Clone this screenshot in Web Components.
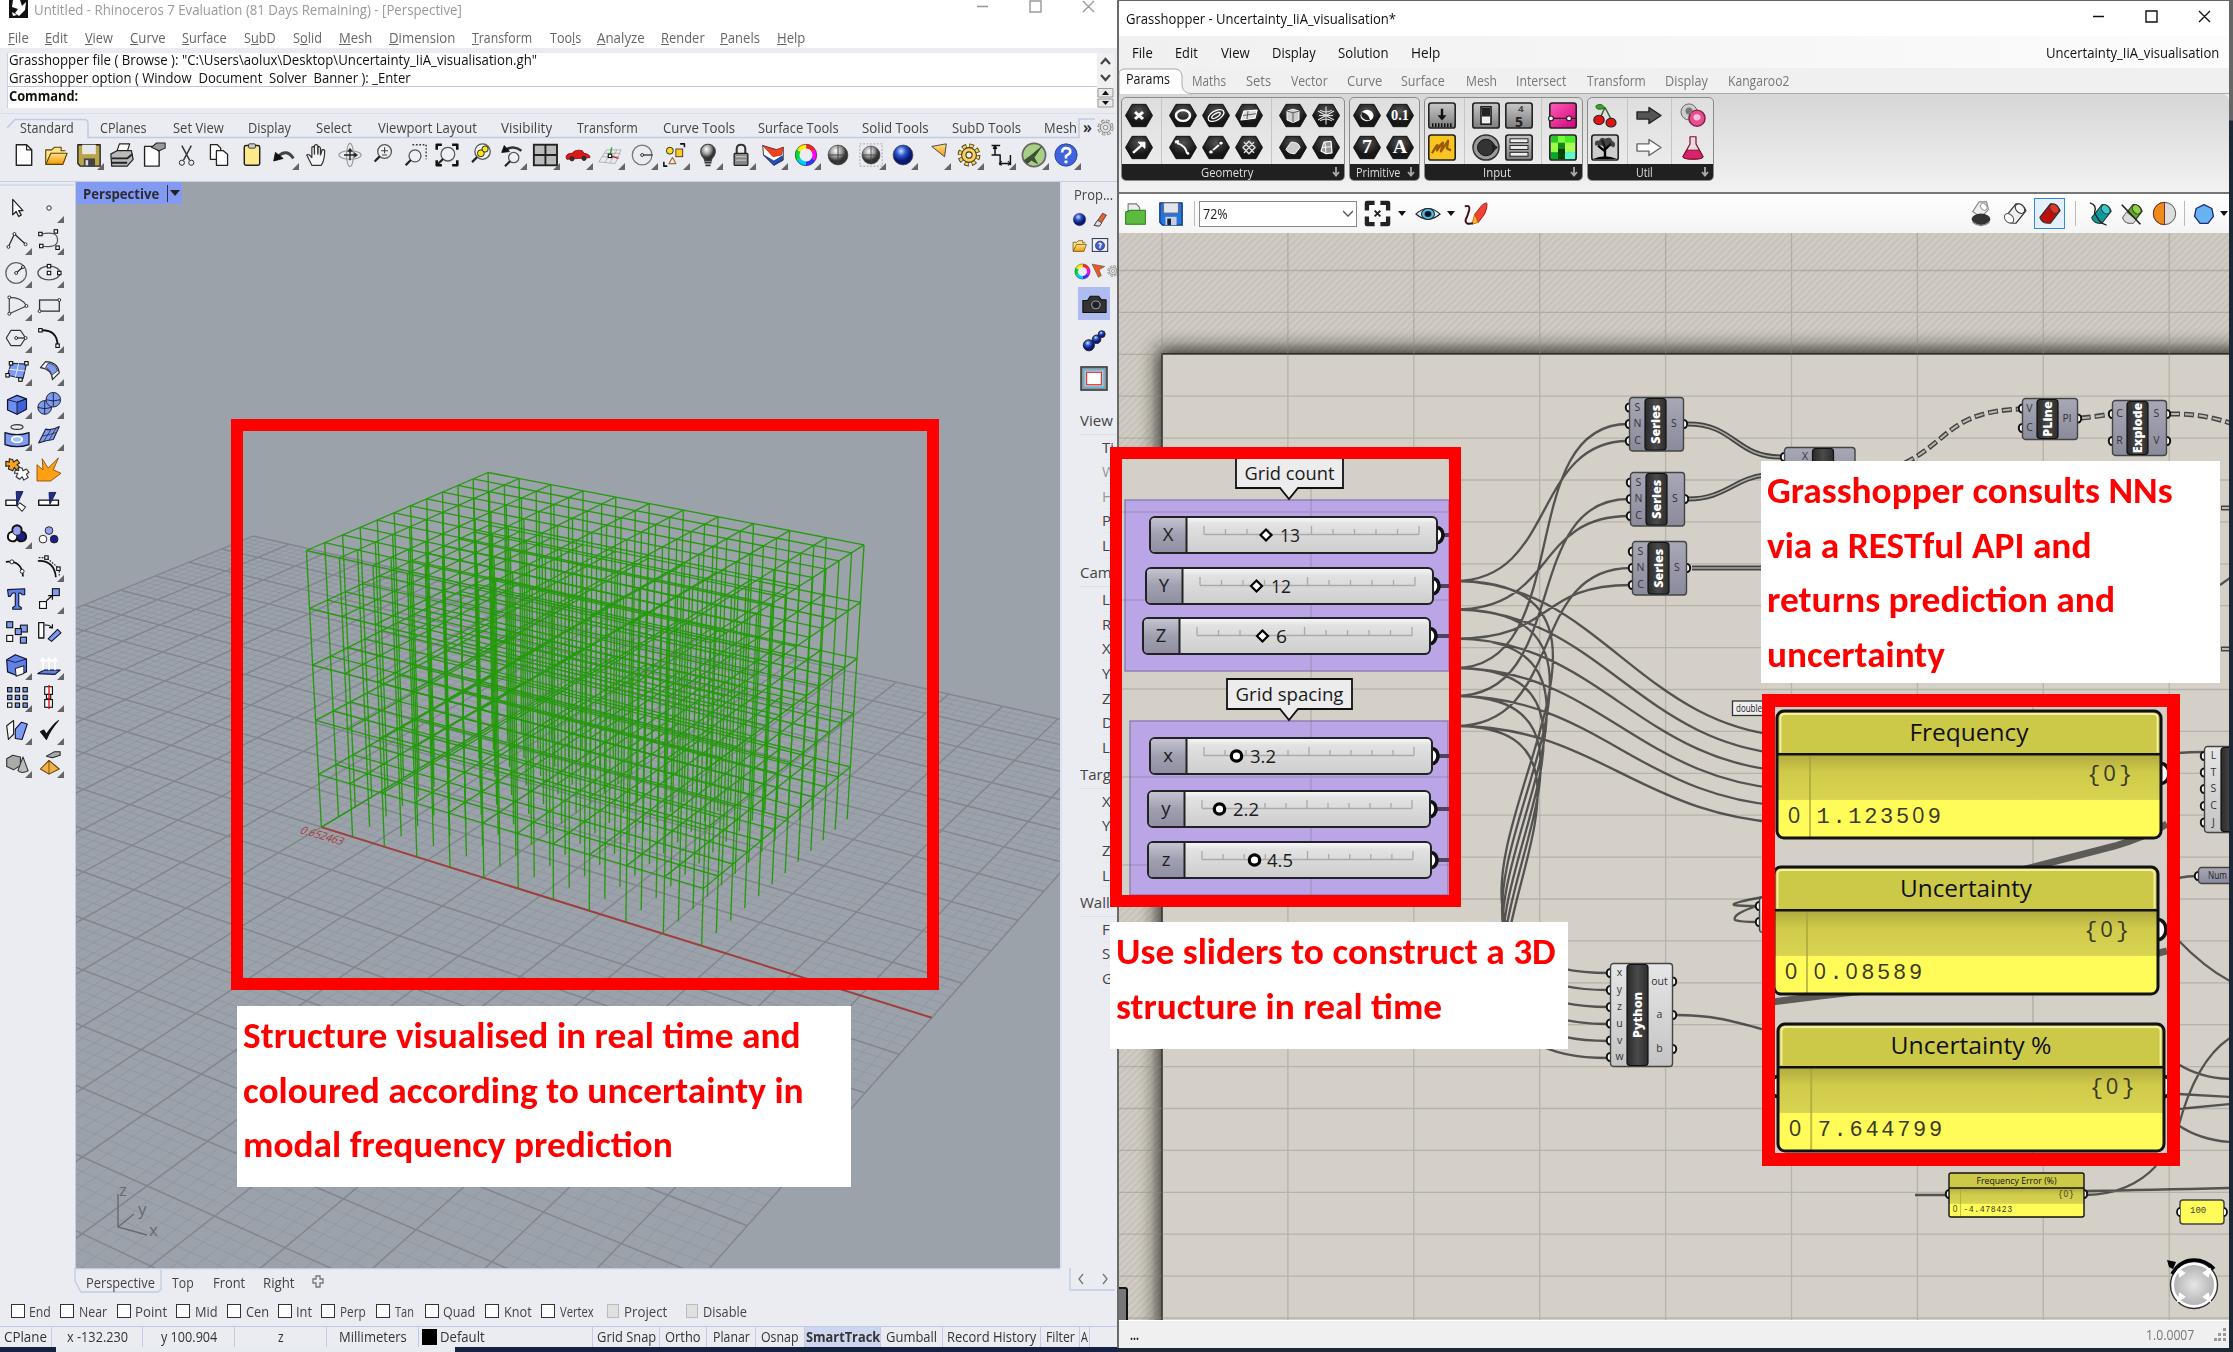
<!DOCTYPE html>
<html lang="en">
<head>
<meta charset="utf-8">
<title>Rhino and Grasshopper</title>
<style>
body{margin:0;width:2233px;height:1352px;overflow:hidden;font-family:"Open Sans","Noto Sans",sans-serif;background:#fff}
</style>
</head>
<body>
<desk-top></desk-top>
<script>
function define(name, css, html, after) {
  customElements.define(name, class extends HTMLElement {
    connectedCallback() {
      if (this.shadowRoot) return;
      const root = this.attachShadow({mode: 'open'});
      root.innerHTML = '<style>' + css + '</style>' + (typeof html === 'function' ? html(this) : html);
      if (after) after(this, root);
    }
  });
}
const num = (el, n) => parseFloat(el.getAttribute(n));

/* Text squeezed or stretched to a given width */
define('fit-text', ':host{display:inline-block;white-space:pre;flex:none}span{display:inline-block;transform-origin:0 50%}u{text-underline-offset:2px}', '<span><slot></slot></span>', (el, root) => {
  const s = root.querySelector('span'), w = num(el, 'w'), n = s.offsetWidth;
  el.style.width = w + 'px';
  if (n) s.style.transform = 'scaleX(' + (w / n) + ')';
});
/* A row of labels; each entry is [text, left, right] measured from the row's start */
function run(items, start) {
  let at = start || 0, out = '';
  for (const [t, a, b, cls] of items) {
    out += `<fit-text w="${b - a}" class="${cls || ''}" style="margin-left:${a - at}px">${t}</fit-text>`;
    at = b;
  }
  return out;
}

/* ---------- icons, all on a 28 x 28 box ---------- */
const S = (d, c, w, f) => `<path d="${d}" fill="${f || 'none'}" stroke="${c || '#222'}" stroke-width="${w || 1.4}" stroke-linejoin="round"/>`;
const sq = (x, y, f, s) => `<rect x="${x}" y="${y}" width="${s || 4}" height="${s || 4}" fill="${f || '#fff'}" stroke="#111" stroke-width="1.3"/>`;
const dot = (x, y, r, f) => `<circle cx="${x}" cy="${y}" r="${r || 1.7}" fill="${f || '#fff'}" stroke="#222" stroke-width="1.1"/>`;
const B = '#7d9cf0';
const lens = (x, y, r) => `<circle cx="${x}" cy="${y}" r="${r}" fill="#eef1f4" stroke="#555" stroke-width="1.5"/><path d="M${x - r * .7} ${y + r * .7}L${x - r * .7 - 6} ${y + r * .7 + 6}" stroke="#222" stroke-width="2.6"/>`;
const ball = (g) => `<circle cx="14" cy="14" r="10.5" fill="url(#${g})" stroke="#333" stroke-width=".7"/>`;
const wheel = (cx, cy, r, w) => ['#f22', '#f0f', '#33f', '#0cf', '#0d3', '#fe0'].map((c, i) => {
  const a = (i * 60 - 90) * Math.PI / 180, b = (i * 60 - 29) * Math.PI / 180;
  return `<path d="M${cx + r * Math.cos(a)} ${cy + r * Math.sin(a)}A${r} ${r} 0 0 1 ${cx + r * Math.cos(b)} ${cy + r * Math.sin(b)}" fill="none" stroke="${c}" stroke-width="${w}"/>`;
}).join('') + `<circle cx="${cx}" cy="${cy}" r="${r + w / 2}" fill="none" stroke="#333" stroke-width=".8"/>`;
const gear = (c, s) => `<circle cx="14" cy="14" r="10.800" fill="none" stroke="${s}" stroke-width="5" stroke-dasharray="5.200 3.280"/><circle cx="14" cy="14" r="10.500" fill="none" stroke="${c}" stroke-width="3.400" stroke-dasharray="3.600 4.647" stroke-dashoffset="-.7"/><circle cx="14" cy="14" r="8.600" fill="${c}" stroke="${s}" stroke-width="1.200"/><circle cx="14" cy="14" r="3.600" fill="#eee" stroke="${s}" stroke-width="1.300"/>`;
const hex = (g) => `<path d="M7 1.5H21L27.5 14 21 26.5H7L.5 14Z" fill="url(#hx)" stroke="#111"/>${g}`;
const key = (g, f) => `<rect x=".8" y="1" width="26.4" height="26" rx="2.5" fill="${f || 'url(#gy)'}" stroke="#222" stroke-width="1.6"/>${g}`;
const tube = (c, d) => `<path d="M4 18L15 4Q22 3 25 11L15 24Q6 25 4 18Z" fill="${c}" stroke="#333" stroke-width="1.200"/><ellipse cx="19" cy="9" rx="4" ry="5.5" transform="rotate(-40 19 9)" fill="${d}" stroke="#333"/>`;
const DEFS = `<defs>
<radialGradient id="hx" cx=".5" cy=".3"><stop offset="0" stop-color="#555"/><stop offset="1" stop-color="#161616"/></radialGradient>
<linearGradient id="gy" x2="0" y2="1"><stop offset="0" stop-color="#c8c8c8"/><stop offset="1" stop-color="#7d7d7d"/></linearGradient>
<radialGradient id="gb" cx=".4" cy=".3"><stop offset="0" stop-color="#fff"/><stop offset=".6" stop-color="#999"/><stop offset="1" stop-color="#333"/></radialGradient>
<radialGradient id="bb" cx=".4" cy=".3"><stop offset="0" stop-color="#cfe0ff"/><stop offset=".5" stop-color="#2a55d0"/><stop offset="1" stop-color="#0a1870"/></radialGradient>
<linearGradient id="yl" x2="0" y2="1"><stop offset="0" stop-color="#ffe08a"/><stop offset="1" stop-color="#f39a06"/></linearGradient>
<linearGradient id="pk" x2="1" y2="1"><stop offset="0" stop-color="#ff5fb4"/><stop offset="1" stop-color="#d2007c"/></linearGradient></defs>`;
const ICON = {
  page: S('M5 2H17L23 8V26H5Z', '#222', 1.6, '#fff') + S('M17 2V8H23'),
  open: S('M2 24V8H9L12 5H20V9H25', '#5a4300', 1.3, '#ffe28a') + S('M2 25L8 12H27L22 25Z', '#5a4300', 1.3, 'url(#yl)'),
  save: S('M1 2H27V27H4L1 24Z', '#222', 1.6, '#b8a548') + '<path d="M6 2H22V13H6Z" fill="#e8e8e8"/><path d="M8 18H21V27H8Z" fill="#444"/><path d="M10 20H13V26H10Z" fill="#ddd"/>',
  print: S('M8 10L11 1H23L20 10', '#222', 1.4, '#fff') + S('M1 13L8 9H25L27 19L20 27H2Z', '#222', 1.4, '#bbb') + S('M2 18H20L26 13M2 23H20', '#222', 2.2),
  prop: S('M3 4H14L20 10V27H3Z', '#222', 1.6, '#fff') + S('M11 5L17 0H27V6L20 9Z', '#222', 1.2, '#999'),
  cut: S('M8 3L17 20M19 3L10 20', '#333', 1.7) + dot(8, 23, 3, 'none') + dot(19, 23, 3, 'none'),
  copy: S('M4 2H12L16 6V19H4Z', '#222', 1.5, '#fff') + S('M11 9H19L24 13V26H11Z', '#222', 1.5, '#fff'),
  paste: '<rect x="5" y="3" width="18" height="23" rx="2" fill="#fbe98b" stroke="#222" stroke-width="1.7"/><rect x="10" y="1" width="8" height="5" rx="1" fill="#ccc" stroke="#222"/>',
  undo: S('M25 18Q17 6 7 16', '#444', 3.5) + S('M2 21L4 11L13 18Z', '#111', 1, '#111'),
  hand: S('M8 26Q5 20 2 14Q4 12 8 17V5Q10 3 11 6V13V3Q13 1 15 3V13V5Q17 3 18 6V14L20 8Q22 7 23 9Q23 20 19 26Z', '#333', 1.4, '#f4f4f4') + S('M11 12V5M15 12V4M18.500 13V7', '#333', 1),
  orbit: '<ellipse cx="14" cy="14" rx="13" ry="5" fill="none" stroke="#999" stroke-width="1.3"/><ellipse cx="14" cy="14" rx="4" ry="13.5" fill="none" stroke="#999" stroke-width="1.3"/>' + S('M7 14H21M14 8V20', '#222', 1.6) + S('M14 6L11 10H17ZM23 14L19 11V17Z', '#222', .5, '#222'),
  zoom: lens(17, 10, 8) + S('M13 9H21M17 5V12M14 14H20', '#444', 1.3),
  zwin: '<path d="M11 2H27V19" fill="none" stroke="#333" stroke-width="1.6" stroke-dasharray="2 2"/>' + lens(14, 15, 7),
  zext: S('M2 8V2H8M20 2H26V8M26 20V26H20M8 26H2V20', '#111', 3) + lens(15, 13, 8),
  zsel: lens(17, 10, 9) + dot(15, 12, 4, '#ffe610') + dot(20, 7, 3.6, '#ffe610'),
  zundo: lens(16, 17, 6) + S('M25 9Q16 2 7 8', '#333', 3) + S('M2 11L5 3L11 10Z', '#111', 1, '#111'),
  four: '<rect x="1" y="2" width="27" height="24" fill="#bbb" stroke="#222" stroke-width="2.2"/>' + S('M14.500 2V26M1 14H28', '#222', 2.2),
  car: S('M0 16Q1 12 7 12Q11 7 19 9L21 12Q28 13 28 17L1 19Z', '#801010', 1, '#e01717') + dot(7, 18.5, 2.4, '#333') + dot(21, 18, 2.4, '#333'),
  cplane: S('M1 22L10 8H27L20 24ZM5 16H24M8 12H26M8 23L16 8M14 23L22 8', '#aaa', 1) + S('M14 15L16 5', '#2a2', 1.6) + S('M14 15L24 18', '#c22', 1.6) + sq(12, 13),
  circ: '<circle cx="13" cy="14" r="11.5" fill="none" stroke="#777" stroke-width="1.5"/>' + S('M13 14H25') + dot(13, 14),
  sel: dot(8, 9, 4, '#ffdc1e') + '<rect x="15" y="7" width="8" height="9" fill="#ffc91e" stroke="#333"/>' + S('M7 24L11 17L15 24Z', '#a63', 1.3) + S('M20 1H25V5M1 22V27H5', '#111', 1.8),
  bulb: S('M10 21Q10 18 7 15Q3 8 9 3Q14 0 19 3Q25 8 21 15Q18 18 18 21Z', '#444', 1.3, 'url(#gb)') + S('M10 23H18M11 26H17', '#333', 2),
  lock: S('M9 13V7Q9 2 14 2Q19 2 19 7V13', '#333', 2.4) + '<rect x="6" y="12" width="16" height="14" rx="1" fill="#888" stroke="#222" stroke-width="1.5"/>' + S('M8 16H20M8 20H20', '#ddd', 1),
  render: S('M2 3L19 8L26 5V20L15 26L3 14Z', '#222', 1, '#fff') + S('M2 3L17 8L26 5L24 14L14 16Z', '#922', .8, '#f0441c') + S('M3 14L15 21L25 15V20L15 26Z', '#127', .8, '#2450b8'),
  wheel: wheel(14, 14, 10, 5), gball: `<g transform="translate(-1.400 -1.400) scale(1.1)">${ball('gb')}<path d="M4 14H24M14 4V24" stroke="#444"/></g>`, bball: `<g transform="translate(-1.400 -1.400) scale(1.1)">${ball('bb')}</g>`,
  gballd: '<rect x="1" y="1" width="26" height="26" fill="none" stroke="#999" stroke-dasharray="2 2"/>' + ball('gb') + S('M4 14H24M14 4V24', '#444', 1),
  cone: S('M9 4L26 1L24 16Z', '#444', 1.1, 'url(#yl)'), gears: gear('#f3d464', '#4a3a10'), gearg: gear('#ddd', '#777'),
  dim: S('M3 3H13M7 3V14M3 14H13V26M13 24H25M25 14V26M7 3L5 7M7 3L9 7', '#111', 1.7) + S('M15 21L12 24L15 26M22 21L25 24L22 26', '#111', 1.2),
  gh: '<circle cx="14" cy="14" r="13.500" fill="#a8cf86" stroke="#666" stroke-width="2"/>' + S('M3 20L10 15L23 4L14 17L18 24L11 20L6 24Z', '#354c2b', 1, '#3e5138'),
  help: '<circle cx="14" cy="14" r="13" fill="#3f63dc" stroke="#2440a0"/>' + S('M9.500 11Q9.500 6 14 6Q19 6 19 10Q19 13 14 15V18', '#fff', 3) + '<circle cx="14" cy="22" r="2" fill="#fff"/>',
  arrow: S('M9 4V22L13 18L16 24L19 22L16 17H21Z', '#222', 1.5, '#fff'), pt: dot(14, 14, 2.6),
  pline: S('M4 22L11 7L24 19') + dot(4, 22) + dot(11, 7) + dot(24, 19),
  crv: S('M5 7Q24 3 24 14Q24 24 5 21', '#555') + sq(2, 5) + sq(20, 2) + sq(3, 19) + sq(22, 21),
  circ2: '<circle cx="13" cy="14" r="12" fill="none" stroke="#666" stroke-width="1.5"/>' + S('M13 14L21 7') + dot(13, 14) + dot(21, 7),
  ell: '<ellipse cx="14" cy="14" rx="13" ry="8" fill="none" stroke="#555" stroke-width="1.5"/>' + sq(12, 4) + sq(12, 12) + sq(24, 12),
  arc: S('M5 4Q20 4 25 14L5 23Z', '#444') + dot(5, 4) + dot(25, 14) + dot(5, 23),
  rect: '<rect x="3" y="7" width="23" height="13" fill="none" stroke="#333" stroke-width="1.5"/>' + dot(26, 7) + dot(3, 20),
  poly: S('M7 5H18L24 14L18 23H7L1.500 14Z', '#333') + S('M13 14H24') + dot(13, 14) + dot(24, 14),
  blend: S('M4 5Q24 4 24 23', '#111', 2.2) + sq(2, 3) + sq(22, 21),
  srf: S('M7 5L25 6L21 23L3 19Z', '#224', 1.3, B) + S('M16 5L12 21M5 12L23 14', '#dfe7ff', 1.2) + sq(5, 3) + sq(23, 3) + sq(1, 17) + sq(16, 22),
  sweep: S('M4 10L10 3Q24 3 26 16L18 24Q18 12 4 10Z', '#333', 1.4, '#fff') + S('M13 5Q22 6 24 14L17 19Q16 12 10 10Z', '#335', 1, B),
  box: S('M3 9L14 4L25 8V20L14 26L3 21Z', '#113', 1.5, '#6d8ff0') + S('M14 12V26L25 20V8Z', '#113', 1, '#3f62d4') + S('M3 9L14 12L25 8', '#113', 1),
  balls: dot(9, 18, 8, B) + dot(19, 9, 8.5, B) + S('M1 18Q9 21 17 18M9 10V26M11 9Q19 12 27 9M19 1V17', '#113', 1),
  hole: '<ellipse cx="14" cy="3.500" rx="7" ry="2.800" fill="none" stroke="#333" stroke-width="1.400"/>' + S('M0 10Q14 15 28 10V24Q14 29 0 24Z', '#113', 1.5, B) + '<ellipse cx="14" cy="18" rx="6" ry="3.500" fill="#9cc4ff" stroke="#fff" stroke-width="2.200"/>',
  mesh: S('M2 22L10 6Q18 8 26 3L19 18Q11 19 2 22Z', '#224', 1.3, B) + S('M6 14Q14 13 22 10M8 20L16 7M14 19L22 5', '#224', .9),
  puzzle: S('M1 5L5 6L5 2L9 3L10 6L14 3L17 7L14 9L17 12L13 15L11 12L9 16L4 14L5 10L1 11Z', '#222', 1.3, '#f9a51a') + S('M12 15L16 16L16 12L20 13L21 16L25 14L28 18L25 20L27 24L22 27L20 23L17 26L13 23L15 19L11 19Z', '#333', 1.3, '#fff'),
  burst: S('M0 28V9L7 15L6 2L13 13L25 1L19 15L28 19L16 28Z', '#8a4a00', 1, '#ff9f16'),
  trim: S('M1 13H14V19H1Z', '#111', 1.5, '#fff') + S('M13 3H21L14 18Z', '#114', 1, '#1f2f8f') + S('M17 16L24 21L20 26L14 20Z', '#333', 1.2, '#fff'),
  split: S('M2 13H25V19H2Z', '#111', 1.6, '#fff') + S('M14 4H22L15 18Z', '#114', 1, '#1f2f8f'),
  grp: '<g stroke-width="2">' + dot(9, 17, 5.5, '#fff') + dot(19, 17, 5.5, '#1d1d8a') + dot(14, 10, 5.5, '#99a0f4') + '</g>' + S('M9 11.500A5.500 5.500 0 1 0 14 19A5.500 5.500 0 1 0 19 11.500A5.500 5.500 0 1 0 9 11.500', '#111', 2.2),
  ungrp: dot(7, 20, 4.5, '#fff') + dot(20, 20, 4.5, '#1d1d8a') + dot(14, 10, 4.5, '#99a0f4'),
  edit: S('M1 8Q20 6 21 25', '#111', 2) + dot(8, 8, 2.3) + dot(20, 19, 2.3),
  edit2: S('M1 7Q20 6 22 26', '#111', 2) + '<path d="M2 3H11L26 16V24" fill="none" stroke="#222" stroke-dasharray="2 1.500" stroke-width="1.300"/>' + sq(9, 1) + sq(23, 14),
  T: S('M3 3L23 2V9H20L18 7H16V22L19 24V26H9V24L12 22V7H9L6 11H4Z', '#113', 1.3, '#5f82e6'),
  move: sq(3, 17, '#fff', 8) + sq(18, 2, B, 8) + S('M11 16L18 10M13 10H18V15', '#111'),
  array: sq(2, 2, B, 7) + sq(18, 6, B, 8) + sq(12, 10, B, 7) + sq(2, 18, '#fff', 7) + sq(18, 20, B, 7),
  rot: S('M2 3H8V21H2Z', '#111', 1.5, '#fff') + S('M13 22L24 11L28 15L17 25Z', '#113', 1.3, B) + S('M9 6Q15 5 18 10M14 9H18V5', '#111'),
  bool: S('M2 8L12 2L25 7V22L13 26L3 22Z', '#113', 1.4, '#5f82e6') + S('M12 18L22 15V24L13 27Z', '#222', 1.2, '#fff') + S('M2 8L12 11L25 7', '#113', 1),
  extr: S('M1 24L8 20H27L21 25Z', '#113', 1.3, '#5f82e6') + S('M7 20V8M14 20V8M21 20V8M4 10L7 6L10 10M11 10L14 6L17 10M18 10L21 6L24 10', '#fff', 1.8),
  grid9: [0, 1, 2].map(i => [0, 1, 2].map(j => sq(3 + 9 * i, 3 + 9 * j, j == 2 && i == 0 ? '#fff' : B, 5)).join('')).join(''),
  align: sq(9, 2, '#fff', 9) + sq(11, 11, '#fff', 5) + sq(9, 17, '#fff', 9) + S('M14 0V28', '#e01010', 1.6),
  flow: S('M2 9L10 3V19L4 25Z', '#222', 1.4, '#fff') + S('M12 24V13L19 5L26 7L20 25Z', '#113', 1.3, B),
  check: S('M4 16L8 14L11 19Q18 8 25 3Q16 13 11 25Z', '#111', 1.2, '#111'),
  solids: S('M2 9L9 5L18 7V17L10 22L2 18Z', '#333', 1.3, '#aaa') + S('M21 7L27 23Q20 27 15 23Z', '#333', 1.2, '#bbb'),
  pyr: S('M14 11L26 21L14 27L4 21Z', '#6b4200', 1.2, '#f0b04a') + S('M14 11V27', '#6b4200', 1) + S('M11 6L20 1H27V5L18 8Z', '#222', 1.2, '#aaa'),
  eraser: S('M5 24L18 5L24 8L13 25Z', '#333', 1.2, '#e8632d') + S('M5 24L10 16L17 20L13 25Z', '#333', 1.2, '#ddd'),
  help2: '<rect x="2" y="4" width="24" height="20" fill="#eef" stroke="#234" stroke-width="1.500"/>' + dot(14, 15, 7, '#4062d8') + S('M12 13Q14 9 16 13L14 16V19', '#fff', 2),
  camera: S('M2 10H7L10 5H19L22 9H27V24H2Z', '#111', 1.2, '#333') + dot(16, 15, 6, '#888') + dot(16, 15, 3.3, '#123'),
  chain: dot(8, 19, 6.5, 'url(#bb)') + dot(17, 12, 5, 'url(#bb)') + dot(23, 6, 4, 'url(#bb)'),
  frame: '<rect x="1" y="2" width="26" height="24" fill="#8d9499" stroke="#333" stroke-width="1.500"/><rect x="4.500" y="5.500" width="19" height="17" fill="#fff" stroke="#6cc4e8" stroke-width="2"/><rect x="6.500" y="7.500" width="15" height="13" fill="#fff" stroke="#e33" stroke-width="1.400"/>',
  cursor: S('M2 2L24 6L14 12L18 22L13 25Z', '#444', 1, '#ee5a1d'),
  hx: hex(S('M10 10L18 18M18 10L10 18', '#fff', 3)), hv: hex(S('M8 20L18 10', '#fff', 2.5) + S('M13 8H20V15Z', '#fff', 1, '#fff')),
  ho: hex('<ellipse cx="14" cy="14" rx="7" ry="6" fill="none" stroke="#fff" stroke-width="2.500"/>'),
  hoo: hex('<g transform="rotate(-35 14 14)" fill="none" stroke="#fff" stroke-width="1.300"><ellipse cx="14" cy="14" rx="9" ry="5"/><ellipse cx="14" cy="14" rx="5" ry="2"/></g>'),
  hpl: hex(S('M6 19L9 9L22 8L20 17Z', '#fff', 1.3, '#ddd') + S('M13 9L12 18M8 14L21 12', '#555', 1)),
  harc: hex(S('M8 9Q17 12 18 21', '#fff', 2) + S('M6 8L10 7M18 21L20 20', '#fff', 3)), hln: hex(S('M9 19L19 9', '#fff', 2) + dot(9, 19, 2.4) + dot(19, 9, 2.4)),
  hsr: hex(S('M14 7L20 14L14 21L8 14ZM9 8L19 20M19 8L9 20', '#ddd', 1.5)), hbx: hex(S('M8 9L14 7L20 9V19L14 22L8 19Z', '#fff', 1, '#ccc') + S('M14 11V22M8 9L14 11L20 9', '#555', 1)),
  hms: hex(S('M14 4V24M6 9L22 19M22 9L6 19M8 8Q14 12 20 8M8 20Q14 16 20 20M7 14H21', '#ddd', 1.1)),
  htb: hex(S('M7 16L12 8Q20 8 21 14L16 21Q9 21 7 16Z', '#fff', 1, '#ccc')), hsd: hex(S('M9 18L12 8L19 7L20 20L14 21Z', '#fff', 1.2, '#999') + S('M13 8L14 21M11 14L20 13', '#fff', 1)),
  hb: hex('<circle cx="14" cy="14" r="6.500" fill="#fff"/><path d="M9 10A6.500 6.500 0 0 0 17 19Q16 12 9 10" fill="#222"/>'),
  h01: hex('<text x="14" y="19.500" font-size="17" font-weight="700" fill="#fff" text-anchor="middle" font-family="Liberation Serif,serif" textLength="18" lengthAdjust="spacingAndGlyphs">0.1</text>'),
  h7: hex('<text x="14" y="20.500" font-size="20" font-weight="700" fill="#fff" text-anchor="middle" font-family="Liberation Serif,serif">7</text>'),
  hA: hex('<text x="14" y="20.500" font-size="20" font-weight="700" fill="#fff" text-anchor="middle" font-family="Liberation Serif,serif">A</text>'),
  kdown: key(S('M14 7V15', '#111', 2.4) + S('M10 14H18L14 19Z', '#111', .5, '#111') + '<path d="M4 24H24" stroke="#111" stroke-width="4" stroke-dasharray="1.500 1.500"/>'),
  kscr: key(S('M4 20L8 13Q11 9 9 17Q12 11 15 9Q14 14 13 18Q17 12 20 7L19 15L23 17', '#9a5b00', 2.4), '#fbc521'), ksw: key('<rect x="9" y="5" width="10" height="18" fill="#eee" stroke="#111" stroke-width="1.500"/><path d="M10 6H18V15H10Z" fill="#222"/>'),
  k45: key('<text x="16" y="10" font-size="10" font-weight="700" fill="#444" text-anchor="middle">4</text><text x="14" y="26" font-size="14" font-weight="700" fill="#222" text-anchor="middle">5</text>'),
  kdial: '<circle cx="14" cy="14" r="13" fill="#9a9a9a" stroke="#333" stroke-width="1.500"/><circle cx="14" cy="14" r="8.500" fill="#333" stroke="#111"/><path d="M20 9L26 14L20 19" fill="#222"/>',
  klist: key(['5', '12', '19'].map(y => `<rect x="5" y="${y}" width="18" height="4" fill="#eee" stroke="#222"/>`).join('')),
  kgrad: key(S('M1 17H27', '#222') + dot(2, 17, 2.4) + dot(20, 17, 2.4), 'url(#pk)'),
  kimg: key('<path d="M2 2H9V9H2Z" fill="#2c2"/><path d="M9 2H16V9H9Z" fill="#7f3"/><path d="M16 2H26V9H16Z" fill="#4e2"/><path d="M2 9H9V19H2Z" fill="#9f4"/><path d="M9 9H16V15H9Z" fill="#181"/><path d="M9 15H16V26H9Z" fill="#040"/><path d="M16 9H26V19H16Z" fill="#af5"/><path d="M2 19H9V26H2Z" fill="#0a2"/><path d="M16 19H26V26H16Z" fill="#5fc"/>'),
  cherry: S('M14 5L9 17M14 5L20 18', '#363', 1.5) + S('M14 6Q4 9 5 3Q11 -1 14 6Z', '#262', 1, '#3ba32a') + dot(8, 19, 5.2, '#df1414') + dot(20, 22, 5, '#df1414'),
  tree: key(S('M14 26V14M14 18L7 12M14 16L20 10M14 14L11 6', '#000', 2.4) + '<path d="M4 12Q3 6 8 7Q10 2 14 5Q20 2 21 7Q26 9 23 14Q18 11 14 13Q8 11 4 12Z" fill="#222" opacity=".8"/><path d="M2 26Q14 20 26 26Z" fill="#000"/>', '#ccc'),
  arD: S('M2 10H14V5L26 14L14 23V18H2Z', '#222', 1.4, '#555'), arL: S('M2 10H14V5L26 14L14 23V18H2Z', '#666', 1.4, '#fff'),
  blob: '<ellipse cx="10" cy="10" rx="8" ry="9" fill="#ccc" stroke="#666"/><ellipse cx="18" cy="17" rx="8" ry="9" fill="#e4508f" stroke="#8a1c4c" stroke-width="1.500"/><ellipse cx="10" cy="9" rx="3.500" ry="4" fill="#777"/><circle cx="18" cy="16" r="3.500" fill="#fbd"/>',
  flask: S('M11 2H17V10L24 24Q24 27 14 27Q4 27 4 24L11 10Z', '#712', 1.2, '#f0d8e2') + S('M8 17L20 17L24 24Q24 27 14 27Q4 27 4 24Z', '#712', 1, '#d8246c'),
  gopen: S('M5 12V3H15L19 7V13', '#777', 1.3, '#eee') + S('M2 25V12L8 10H26V25Z', '#2a7a18', 1.2, '#5cba40'),
  gsave: S('M2 2H26V26H5L2 23Z', '#103a80', 1.5, '#2474e0') + '<path d="M6 2H22V13H6Z" fill="#dfe6ee" stroke="#666"/><path d="M8 17H20V26H8Z" fill="#ccd"/><path d="M10 19H14V26H10Z" fill="#124"/>',
  gframe: S('M3 11V3H11M17 3H25V11M25 17V25H17M11 25H3V17', '#222', 4.5) + S('M11 11L17 17M17 11L11 17', '#222', 2),
  eye: S('M1 14Q14 0 27 14Q14 27 1 14Z', '#222', 1.4, '#dff2fb') + dot(14, 14, 7, '#4fb6e8') + dot(14, 14, 3.2, '#012'),
  brush: S('M13 15L21 5Q26 1 27 3Q27 9 24 15L17 24Z', '#a11', 1, '#ee4433') + S('M13 15L17 24L10 26Z', '#b60', 1, '#ffb42a') + S('M2 6Q8 4 7 10Q5 17 3 21Q2 27 11 25', '#411', 2.2),
  v1: S('M5 12L12 2H20L22 10L14 18Z', '#888', 1.2, '#eee') + '<ellipse cx="17" cy="7" rx="3" ry="4" transform="rotate(-40 17 7)" fill="#fff" stroke="#999"/><ellipse cx="14" cy="20" rx="10" ry="6" fill="#333"/><path d="M5 23Q14 30 23 23" fill="none" stroke="#888" stroke-width="1.500"/>',
  v2: tube('#eee', '#fff') + '<ellipse cx="8" cy="19" rx="4" ry="5.500" transform="rotate(-40 8 19)" fill="#fff" stroke="#555"/>', v3: tube('#bd0f0c', '#e2352a'), v4: tube('#0a9a9c', '#38c8c8') + S('M2 2Q10 4 7 12Q12 24 20 26', '#222', 1.5),
  v5: tube('#62a820', '#8ed040') + S('M4 18L8 12L19 20L15 24Q6 25 4 18Z', '#777', 1, '#ddd') + S('M3 4L23 25', '#222', 1.8), v6: '<circle cx="14" cy="14" r="12.500" fill="#ddd" stroke="#444"/><path d="M14 1.500A12.500 12.500 0 0 0 14 26.500Z" fill="#f18a1c" stroke="#622"/>',
  v7: S('M14 2L24 7L26 17L19 26H9L2 17L4 7Z', '#1d2c7a', 1.7, '#66b2f2')
};
define('ui-icon', ':host{display:block;position:relative;flex:none}svg{display:block;width:100%;height:100%;overflow:visible}i{position:absolute;right:-3px;bottom:-3px;border-left:7px solid transparent;border-bottom:7px solid #666}',
  el => { el.style.width = (el.getAttribute('w') || el.getAttribute('s') || 24) + 'px'; el.style.height = (el.getAttribute('s') || 24) + 'px';
    return `<svg viewBox="0 0 28 28" preserveAspectRatio="none">${DEFS}${ICON[el.getAttribute('n')]}</svg>${el.hasAttribute('fly') ? '<i></i>' : ''}`; });
const ic = (n, s, fly, w) => `<ui-icon n="${n}" s="${s || 24}" ${fly ? 'fly' : ''} ${w ? `w="${w}"` : ''}></ui-icon>`;

/* ---------- Rhino window ---------- */
const CTRL = (c) => `<svg width="130" height="20" viewBox="0 0 130 20" fill="none" stroke="${c}" stroke-width="1.4"><path d="M5 9.500H16M58 4H69V15H58ZM111 4L122 15M122 4L111 15"/></svg>`;
define('rhino-title', ':host{display:flex;align-items:center;height:18px;color:#999;font-size:15px;background:#fff}svg.l{margin-left:9px;flex:none}.c{margin-left:510px}',
  `<svg class="l" width="19" height="18" viewBox="0 0 19 18"><path d="M0 0H19V18H0Z" fill="#111"/><path d="M4 0H11L13 6L17 2L16 10L10 16L6 13L9 9L3 7Z" fill="#fff"/><path d="M3 12L8 15L4 16Z" fill="#fff"/></svg>` + run([['Untitled - Rhinoceros 7 Evaluation (81 Days Remaining) - [Perspective]', 34, 462]], 28) + '<div class="c">' + CTRL('#999') + '</div>');
define('rhino-menu', ':host{display:flex;align-items:center;height:20px;padding:10px 0 0;color:#666;font-size:15px;background:#fff}fit-text{position:relative;top:-1px}',
  run([['<u>F</u>ile', 8, 29], ['<u>E</u>dit', 45, 68], ['<u>V</u>iew', 85, 113], ['<u>C</u>urve', 130, 166], ['<u>S</u>urface', 182, 227], ['S<u>u</u>bD', 244, 276], ['S<u>o</u>lid', 293, 322], ['<u>M</u>esh', 339, 372], ['<u>D</u>imension', 389, 455], ['<u>T</u>ransform', 472, 532], ['Too<u>l</u>s', 550, 581], ['<u>A</u>nalyze', 597, 645], ['<u>R</u>ender', 661, 705], ['<u>P</u>anels', 720, 760], ['<u>H</u>elp', 777, 805]]));
define('rhino-command', `:host{display:block;height:65px;background:#e9ebef;box-sizing:border-box;padding:5px 3px 0 7px;font-size:14.5px;color:#111}
.b{background:#fff;height:55px;display:grid;grid-template-columns:1fr 17px;border-left:1px solid #c8d0e4}.t{display:flex;flex-direction:column}.t div{height:17px;line-height:14px;padding-left:1px}.t div+div{height:16px;line-height:16px}
.t .c{border-top:1px solid #bac6e0;height:20px;line-height:18px;font-weight:700}.s{background:#f0f0f0}svg{display:block}`,
  '<div class="b"><div class="t"><div>' + run([['Grasshopper file ( Browse ): "C:\\Users\\aolux\\Desktop\\Uncertainty_IiA_visualisation.gh"', 0, 528]]) + '</div><div>' + run([['Grasshopper option ( Window  Document  Solver  Banner ): _Enter', 0, 402]]) + '</div><div class="c">' + run([['Command:', 0, 69]]) + `</div></div><svg class="s" width="17" height="55" viewBox="0 0 17 55"><path d="M4 11L8.500 6L13 11M4 22L8.500 27L13 22" fill="none" stroke="#444" stroke-width="2.200"/><path d="M1 35.500H16V44H1ZM1 46H16V54H1Z" fill="#e8e8e8" stroke="#999"/><path d="M5 42L8.500 37.500L12 42ZM5 48L8.500 52L12 48Z" fill="#111"/></svg></div>`);
define('rhino-tabs', `:host{display:flex;align-items:center;height:25px;background:#eaecf1;font-size:14.5px;color:#444;position:relative;padding-top:3px;box-sizing:border-box;border-top:1px solid #d9deeb}
svg{position:absolute;left:0;top:0}ui-icon{margin-left:5px}b{margin-left:6px;font-size:16px;line-height:14px;width:9px;color:#222;font-weight:600}`,
  '<svg width="1117" height="25" fill="none" stroke="#bfcbe4" stroke-width="1.500"><path d="M7 14L15 5.500H84Q88 5.500 88 10V23.500H1079V5H1095"/></svg>' +
  run([['Standard', 20, 74], ['CPlanes', 100, 147], ['Set View', 173, 224], ['Display', 248, 291], ['Select', 316, 352], ['Viewport Layout', 378, 477], ['Visibility', 501, 552], ['Transform', 577, 638], ['Curve Tools', 663, 735], ['Surface Tools', 758, 839], ['Solid Tools', 862, 929], ['SubD Tools', 952, 1021], ['Mesh', 1044, 1077]]) + '<b>»</b>' + ic('gearg', 17));
define('rhino-toolbar', ':host{display:flex;height:44px;background:#eaecf1;padding-left:7.500px;border-bottom:1px solid #c4cde2}div{width:32.580px;height:34px;display:flex;align-items:center;justify-content:center;flex:none}',
  'page open save print prop cut copy paste undo hand orbit zoom zwin zext zsel zundo four car cplane circ sel bulb lock render wheel gball gballd bball cone gears dim gh help'.split(' ').map((n, i) => `<div>${ic(n, 24, [2, 8, 15, 16].includes(i) || (i > 16 && i != 25))}</div>`).join(''));
define('tool-palette', ':host{display:grid;grid-template-columns:32px 32px;grid-auto-rows:32.650px;width:74px;padding:5px 0 0 1px;box-sizing:border-box;background:#eaecf1;border-top:2px solid #d4dbec}div{display:flex;align-items:center;justify-content:center}',
  'arrow pt pline crv circ2 ell arc rect poly blend srf sweep box balls hole mesh puzzle burst trim split grp ungrp edit edit2 T move array rot bool extr grid9 align flow check solids pyr'.split(' ').map((n, i) => `<div>${ic(n, 24, ![0, 16, 17, 18, 19, 21, 22, 24, 26, 27].includes(i))}</div>`).join(''));

/* Camera: a 3x4 projection solved by least squares from known points of the model */
function solveCamera(points) {
  const N = 11, M = Array.from({length: N}, () => new Float64Array(N + 1));
  const add = (r, b) => { for (let i = 0; i < N; i++) { for (let j = 0; j < N; j++) M[i][j] += r[i] * r[j]; M[i][N] += r[i] * b; } };
  for (const [X, Y, Z, u, v] of points) {
    const x = X / 10, y = Y / 10, z = Z / 10, a = u / 1000, b = v / 1000;
    add([x, y, z, 1, 0, 0, 0, 0, -a * x, -a * y, -a * z], a);
    add([0, 0, 0, 0, x, y, z, 1, -b * x, -b * y, -b * z], b);
  }
  for (let c = 0; c < N; c++) {
    let p = c;
    for (let r = c + 1; r < N; r++) if (Math.abs(M[r][c]) > Math.abs(M[p][c])) p = r;
    [M[c], M[p]] = [M[p], M[c]];
    for (let r = 0; r < N; r++) if (r != c) { const f = M[r][c] / M[c][c]; for (let k = c; k <= N; k++) M[r][k] -= f * M[c][k]; }
  }
  const P = M.map((r, i) => r[N] / r[i]);
  return (X, Y, Z) => { const x = X / 10, y = Y / 10, z = Z / 10; return [1000 * (P[0] * x + P[1] * y + P[2] * z + P[3]), 1000 * (P[4] * x + P[5] * y + P[6] * z + P[7]), P[8] * x + P[9] * y + P[10] * z + 1]; };
}
function sceneMarkup() {
  const q = (X, Y, Z, a, b) => [X, Y, Z, 290 + a / 2.376, 420 + b / 2.703];
  const cam = solveCamera([q(0, 0, 0, 75, 1104), q(0, 0, 1, 69, 960), q(0, 0, 2, 61, 815), q(0, 0, 3, 53, 665), q(0, 0, 4, 46, 515), q(0, 0, 5, 38, 355),
    q(3, 0, 0, 300, 1183), q(6, 0, 0, 541, 1270), q(8, 0, 0, 711, 1329), q(11, 0, 0, 977, 1423), q(11, 0, 1, 984, 1269), q(11, 3, 0, 1081, 1322), q(11, 6, 0, 1176, 1227), q(11, 9, 0, 1267, 1138),
    q(11, 11, 0, 1325, 1082), q(11, 11, 1, 1331, 941), q(11, 11, 2, 1339, 797), q(11, 11, 3, 1346, 648), q(11, 11, 4, 1356, 495), q(11, 11, 5, 1364, 340),
    q(0, 11, 5, 470, 144), q(4, 11, 5, 773, 212), q(8, 11, 5, 1101, 284), q(0, 4, 5, 210, 271), q(0, 8, 5, 363, 197)]);
  const seg = (a, b) => {
    let p = cam(...a), r = cam(...b); const e = .08;
    if (p[2] < e && r[2] < e) return '';
    const cut = (n, f) => { const t = (e - n[2]) / (f[2] - n[2]); return n.map((v, i) => v + t * (f[i] - v)); };
    if (p[2] < e) p = cut(p, r); if (r[2] < e) r = cut(r, p);
    return `M${(p[0] / p[2]).toFixed(1)} ${(p[1] / p[2]).toFixed(1)}L${(r[0] / r[2]).toFixed(1)} ${(r[1] / r[2]).toFixed(1)}`;
  };
  const LX = 16.6, LY = 24.1, n = 50; let minor = '', major = '', green = '';
  for (let i = -n; i <= n; i++) {
    const d = seg([i * LX / n, -LY, 0], [i * LX / n, LY, 0]) + seg([-LX, i * LY / n, 0], [LX, i * LY / n, 0]);
    if (i % 5) minor += d; else major += d;
  }
  const g = (a, b) => { green += `<path d="${seg(a, b)}"/>`; };
  for (let i = 0; i < 12; i++) for (let j = 0; j < 12; j++) g([i, j, 0], [i, j, 5]);
  for (let k = 1; k < 6; k++) for (let i = 0; i < 12; i++) { g([i, 0, k], [i, 11, k]); g([0, i, k], [11, i, k]); }
  g([0, 0, 0], [0, 11, 0]);
  return `<svg viewBox="75 183 985 1086" width="985" height="1086"><path d="${minor}" stroke="#8e949d" stroke-width="1" fill="none" opacity=".75"/><path d="${major}" stroke="#82868e" stroke-width="1.500" fill="none"/>
  <path d="${seg([0, 0, 0], [LX, 0, 0])}" stroke="#a0403e" stroke-width="2"/><g stroke="#1f9a05" stroke-width="1.35" opacity=".94">${green}</g>
  <text transform="translate(299 834) rotate(16) skewX(-20)" font-size="11" fill="#a83a3a" textLength="44" lengthAdjust="spacingAndGlyphs">0.652463</text>
  <g stroke="#666b70" stroke-width="1.4" fill="none"><path d="M118 1195V1228L147 1236M118 1228L134 1215"/></g><g fill="#666b70" font-size="17"><text x="119" y="1197">z</text><text x="138" y="1216">y</text><text x="149" y="1237">x</text></g></svg>`;
}
define('view-port', ':host{display:block;width:985px;height:1086px;position:relative;background:#9ca2aa;overflow:hidden;border-left:1px solid #c4cde2;box-sizing:border-box}svg{display:block;margin-left:-1px}.l{position:absolute;left:0;top:0;width:106px;height:22px;background:#839af2;display:flex;align-items:center;font-size:14.5px;font-weight:700;color:#2b2b30}i{width:1px;height:17px;background:#333;margin-left:8px}b{border:5px solid transparent;border-top:6px solid #222;border-bottom:0;margin-left:2px}',
  () => sceneMarkup() + '<div class="l">' + run([['Perspective', 7, 83]]) + '<i></i><b></b></div>');
define('side-panel', `:host{display:block;flex:1;background:#eaecf1;overflow:hidden;font-size:15px;color:#444;padding-left:10px;border-left:2px solid #dde2ee;box-sizing:border-box;width:57px}
.r{display:flex;align-items:center;height:26px;gap:4px}.p{height:24px;padding-left:2px}.sel{width:32px;height:33px;background:#aebcf0;display:flex;align-items:center;justify-content:center;margin:3px 0 0 6px}
.i{display:flex;justify-content:center;width:32px;margin:9px 0 0 6px}.i+.i{margin-top:12px}.v{height:29px;margin-left:8px;display:flex;align-items:center;border-bottom:1px solid #dcdfe6;box-sizing:border-box;white-space:nowrap}.v.s{margin-left:30px;height:24.600px;border-color:#e2e4ea}.d{color:#999}.g{height:13.500px}`,
  '<div class="r p">' + run([['Prop...', 0, 39]]) + '</div><div class="r">' + ic('bball', 15) + ic('eraser', 18) + '</div><div class="r" >' + ic('open', 15) + ic('help2', 18) + '</div><div class="r" style="gap:0;padding-left:2px">' + ic('wheel', 17) + ic('cursor', 16) + ic('gearg', 12) + '</div><div class="sel">' + ic('camera', 24, 0, 26) + '</div><div class="i">' + ic('chain', 24) + '</div><div class="i">' + ic('frame', 27, 0, 28) + '</div><div class="g"></div>' +
  [['View', 'Ti', '-W', '-H', 'P', 'L'], ['Cam', 'L', 'R', 'X', 'Y', 'Z', 'D', 'L'], ['Targ', 'X', 'Y', 'Z', 'L'], ['Wall', 'F', 'S', 'G']].map(g => `<div class="v">${g[0]}</div>` + g.slice(1).map(t => `<div class="v s ${t[0] == '-' ? 'd' : ''}">${t.replace('-', '')}</div>`).join('') + '<div style="height:.5px"></div>').join(''));
define('view-tabs', ':host{display:flex;align-items:center;height:28px;background:#eaecf1;font-size:14.500px;color:#444;position:relative}svg{position:absolute;left:0;top:0}',
  '<svg width="1117" height="28" fill="none" stroke="#bfcbe4" stroke-width="1.300"><path d="M75 0V13L81 24H158L161 21V2M75 .7H1060M1070 0V22H1115"/><path d="M316 11V8H320V11H323V15H320V19H316V15H313V11Z" stroke="#777"/><path d="M1083 6L1079 11L1083 16M1103 6L1107 11L1103 16" stroke="#777"/></svg>' + run([['Perspective', 86, 155], ['Top', 172, 194], ['Front', 213, 245], ['Right', 263, 295]]));
const SNAPS = [['End', 11, 29, 51], ['Near', 60, 79, 107], ['Point', 117, 135, 167], ['Mid', 176, 195, 218], ['Cen', 227, 246, 269], ['Int', 278, 296, 312], ['Perp', 321, 340, 366], ['Tan', 376, 395, 414], ['Quad', 425, 443, 475], ['Knot', 485, 504, 532], ['Vertex', 541, 560, 594], ['Project', 607, 624, 667], ['Disable', 686, 703, 747]];
define('osnap-bar', ':host{display:flex;align-items:center;height:30px;background:#eaecf1;font-size:14.500px;color:#444}i{width:14px;height:14px;border:1.500px solid #333;background:#fff;box-sizing:border-box;flex:none}i.x{width:12px;background:#e0e0e0;border-color:#bbb}',
  (() => { let at = 0; return SNAPS.map(([t, b, l, r], k) => { const w = k > 10 ? 12 : 14, s = `<i class="${k > 10 ? 'x' : ''}" style="margin-left:${b - at}px"></i>` + run([[t, l, r]], b + w); at = r; return s; }).join(''); })());
define('status-bar', ':host{display:flex;height:21px;background:#eaecf1;font-size:14px;color:#333;border-top:1px solid #bfcbe4;box-sizing:border-box;line-height:18px}div{display:flex;align-items:center;justify-content:center;border-right:1px solid #c3cce0;box-sizing:border-box;flex:none}.on{background:#cdd5ef;font-weight:700}.l{justify-content:flex-start}i{width:15px;height:16px;background:#000;margin:0 3px}',
  [['CPlane', 52, 43], ['x -132.230', 91, 61], ['y 100.904', 92, 56], ['z', 92, 6], ['Millimeters', 92, 68], ['Default', 174, 45, 'l'], ['Grid Snap', 67, 59], ['Ortho', 47, 36], ['Planar', 49, 37], ['Osnap', 49, 38], ['SmartTrack', 76, 74, 'on'], ['Gumball', 62, 51], ['Record History', 98, 89], ['Filter', 39, 29], ['A', 10, 7]].map(([t, w, tw, c]) => `<div class="${c || ''}" style="width:${w}px">${c == 'l' ? '<i></i>' : ''}<fit-text w="${tw}">${t}</fit-text></div>`).join(''));
define('task-strip', ':host{display:flex;height:5px;background:#14233f}i{margin-left:56px;width:399px;background:#e8ecf2}', '<i></i>');
define('rhino-window', ':host{display:flex;flex-direction:column;width:1117px;height:1352px;background:#eaecf1;overflow:hidden;flex:none}.m{display:flex;height:1086px;flex:none}tool-palette{height:600px;margin-top:2px;margin-right:1px}',
  '<rhino-title></rhino-title><rhino-menu></rhino-menu><rhino-command></rhino-command><rhino-tabs></rhino-tabs><rhino-toolbar></rhino-toolbar><div class="m"><tool-palette></tool-palette><view-port></view-port><side-panel></side-panel></div><view-tabs></view-tabs><osnap-bar></osnap-bar><status-bar></status-bar><task-strip></task-strip>');

/* ---------- Grasshopper window ---------- */
define('gh-title', ':host{display:flex;align-items:center;height:35px;border-top:1px solid #666;background:#fff;font-size:15px;color:#111}fit-text{position:relative;top:-1px}div{margin-left:692px}', run([['Grasshopper - Uncertainty_IiA_visualisation*', 7, 277]]) + '<div>' + CTRL('#111') + '</div>');
define('gh-menu', ':host{display:flex;align-items:center;height:32px;background:linear-gradient(90deg,#f0f0f0,#fcfcfc);font-size:15px;color:#111}',
  run([['File', 13, 34], ['Edit', 56, 79], ['View', 102, 131], ['Display', 153, 197], ['Solution', 219, 270], ['Help', 292, 321], ['Uncertainty_IiA_visualisation', 927, 1100]]));
define('gh-tabs', ':host{display:flex;align-items:center;height:26px;background:#f0f0f0;font-size:14.500px;color:#777;border-bottom:1px solid #aaa;box-sizing:border-box;position:relative}svg{position:absolute;left:0;top:0}.a{color:#111;position:relative;top:-2px}',
  '<svg width="76" height="27"><path d="M0 26V6Q0 1 6 1H56Q62 1 63 8V18Q64 25 72 25.500V27H0Z" fill="#fff" stroke="#aaa"/></svg>' + run([['Params', 7, 51, 'a'], ['Maths', 73, 107], ['Sets', 127, 152], ['Vector', 172, 209], ['Curve', 228, 263], ['Surface', 282, 326], ['Mesh', 347, 378], ['Intersect', 397, 447], ['Transform', 468, 527], ['Display', 546, 589], ['Kangaroo2', 609, 670]]));
define('ribbon-group', `:host{display:flex;flex-direction:column;height:84px;border:1.500px solid #8b8b8b;border-radius:5px;box-sizing:border-box;background:linear-gradient(#dedede,#eee);overflow:hidden;flex:none}
.g{flex:1;display:flex;padding-left:3px;gap:8px}.c{display:grid;grid-auto-flow:column;grid-template-rows:32px 32px;column-gap:5px;align-items:center;align-content:start;padding-top:1px}.c+.c{border-left:1px solid #c5c5c5;padding-left:7px}
.f{height:16px;background:#202020;color:#ddd;font-size:13px;line-height:15px;display:flex;align-items:center;justify-content:center;position:relative;padding-right:13px}svg{position:absolute;right:4px;top:3px}`,
  el => { el.style.width = el.getAttribute('w') + 'px';
    return '<div class="g">' + el.getAttribute('icons').split('|').map(c => `<div class="c">${c.split(' ').map(n => ic(n, n[0] == 'k' || n == 'tree' ? 27 : 25, 0, 28)).join('')}</div>`).join('') + `</div><div class="f"><fit-text w="${el.getAttribute('tw')}">${el.getAttribute('t')}</fit-text><svg width="8" height="10"><path d="M4 0V8M1 5L4 8.500L7 5" stroke="#aaa" stroke-width="1.800" fill="none"/></svg></div>`; });
define('gh-ribbon', ':host{display:flex;gap:4px;height:100px;box-sizing:border-box;padding:3px 0 0 2px;background:linear-gradient(#d6d6d6,#f2f2f2);border-bottom:2px solid #777;border-radius:0 7px 0 0}',
  '<ribbon-group w="224" t="Geometry" tw="52" icons="hx hv|ho harc hoo hln hpl hsr|hbx htb hms hsd"></ribbon-group><ribbon-group w="71" t="Primitive" tw="44" icons="hb h7 h01 hA"></ribbon-group><ribbon-group w="159" t="Input" tw="28" icons="kdown kscr|ksw kdial k45 klist|kgrad kimg"></ribbon-group><ribbon-group w="127" t="Util" tw="17" icons="cherry tree|arD arL|blob flask"></ribbon-group>');
define('gh-toolbar', `:host{display:flex;align-items:center;height:39px;background:linear-gradient(#fff,#f4f4f4)}.cb{width:158px;height:26px;border:1px solid #888;background:#fff;box-sizing:border-box;display:flex;align-items:center;font-size:14.500px;color:#222;margin-right:7px;flex:none}
.cb svg{margin-left:115px}b{border:4px solid transparent;border-top:5px solid #111;border-bottom:0;flex:none}.s{width:1px;height:25px;background:#bbb;flex:none}.on{width:31px;height:31px;border:1.500px solid #2d8be8;box-sizing:border-box;display:flex;align-items:center;justify-content:center;background:#e4f0fb;flex:none}`,
  (() => { const g = n => `<span style="flex:none;width:${n}px"></span>`; return g(5) + ic('gopen', 26, 0, 23) + g(11) + ic('gsave', 26) + g(10) + '<i class="s"></i>' + g(4) + '<div class="cb">' + run([['72%', 3, 28]]) + '<svg width="10" height="7"><path d="M0 1L5 6L10 1" fill="none" stroke="#555" stroke-width="1.300"/></svg></div>' + ic('gframe', 27) + g(7) + '<b></b>' + g(9) + ic('eye', 22, 0, 26) + g(6) + '<b></b>' + g(8) + ic('brush', 25) + g(480) + ic('v1', 27, 0, 26) + g(7) + ic('v2', 27, 0, 28) + g(4.5) + '<div class="on">' + ic('v3', 27) + '</div>' + g(10) + '<i class="s"></i>' + g(12) + ic('v4', 26) + g(5) + ic('v5', 26) + g(7.5) + ic('v6', 25) + g(7) + '<i class="s"></i>' + g(7.5) + ic('v7', 22) + g(5) + '<b></b>'; })());

const cap = (x, y, w, h) => `<rect x="${x}" y="${y}" width="${w}" height="${h}" rx="3" fill="url(#dk)" stroke="#111" stroke-width="1.2"/>`;
const grip = (x, y, side, r) => `<path d="M${x} ${y - (r || 4)}A${(r || 4) * .8} ${r || 4} 0 0 ${side > 0 ? 1 : 0} ${x} ${y + (r || 4)}" fill="#fff" stroke="#111" stroke-width="${r > 5 ? 3.6 : 2}"/>`;
/* Component node of the definition graph */
define('gh-node', ':host{display:block;position:absolute}svg{display:block;overflow:visible}',
  el => {
    const x = num(el, 'x'), y = num(el, 'y'), w = num(el, 'w'), h = num(el, 'h'), cx = num(el, 'cx'), cw = num(el, 'cw') || 21;
    el.style.left = x + 'px'; el.style.top = y + 'px';
    const light = el.hasAttribute('light'), list = a => (el.getAttribute(a) || '').split(',').filter(Boolean).map(s => s.split(':'));
    return `<svg width="${w}" height="${h}"><defs><linearGradient id="dk"><stop offset="0" stop-color="#2a2a2a"/><stop offset=".5" stop-color="#4a4a4a"/><stop offset="1" stop-color="#2d2d2d"/></linearGradient><linearGradient id="bd" x2="0" y2="1"><stop offset="0" stop-color="${light ? '#e6e6e6' : '#a9a8b6'}"/><stop offset="1" stop-color="${light ? '#c4c4c4' : '#8b8a9b'}"/></linearGradient></defs>` +
      list('in').map(([, v]) => grip(0, +v, -1)).join('') + list('out').map(([, v]) => grip(w, +v, 1)).join('') +
      `<rect x=".5" y=".5" width="${w - 1}" height="${h - 1}" rx="3" fill="url(#bd)" stroke="#444" stroke-width="1.4"/>` + (cx ? cap(cx, 1.5, cw, h - 3) : '') +
      `<g font-size="10.500" fill="#333">` + list('in').map(([t, v]) => `<text x="${(cx || 20) - 7.5}" y="${+v + 3.2}" text-anchor="middle">${t}</text>`).join('') + list('out').map(([t, v]) => `<text x="${cx + cw + (w - cx - cw) / 2 - 1}" y="${+v + 3.2}" text-anchor="middle">${t}</text>`).join('') + '</g>' +
      (el.getAttribute('t') ? `<text transform="translate(${cx + cw / 2 + 4.500} ${h / 2 + num(el, 'dy')}) rotate(-90)" text-anchor="middle" font-size="12.500" font-weight="800" fill="#fff">${el.getAttribute('t')}</text>` : '') + '</svg>';
  });
/* Fixed-pitch figures with plain, undotted zeros */
const figures = (s, x, y, step, size) => `<text font-size="${size}" y="${y}" x="${[...s].map((c, i) => (x + i * step).toFixed(1)).join(' ')}">${s.replace(/0/g, '<tspan class="z">0</tspan>')}</text>`;
/* Yellow data panel; the large and the small rendition differ only in scale */
define('data-panel', ':host{display:block;position:absolute}svg{display:block;overflow:visible}.z{font-family:"Open Sans","Noto Sans",sans-serif;font-weight:400}',
  el => {
    const x = num(el, 'x'), y = num(el, 'y'), w = num(el, 'w'), h = num(el, 'h'), k = w > 200 ? 1 : .35, hd = h * .34, md = h * .7, c = w * .086, r = k == 1 ? 7 : 2, sw = k == 1 ? 3 : 1.4;
    el.style.left = x + 'px'; el.style.top = y + 'px';
    const fs = k == 1 ? 24 : 9.5, m = k == 1 ? 22 : 8.2, tw = num(el, 'tw'), gr = k == 1 ? 10 : 4, st = k == 1 ? 15.9 : 5.5;
    return `<svg width="${w}" height="${h}"><defs><linearGradient id="m" x2="0" y2="1"><stop offset="0" stop-color="#b0aa40"/><stop offset=".4" stop-color="#d0cb4a"/><stop offset="1" stop-color="#d8d350"/></linearGradient><clipPath id="c"><rect width="${w}" height="${h}" rx="${r}"/></clipPath></defs>` +
      (el.hasAttribute('gl') ? grip(0, h / 2 - 1, -1, gr) : '') + grip(w, h / 2 - 1, 1, gr) +
      `<g clip-path="url(#c)"><rect width="${w}" height="${h}" fill="#fffb58"/><rect width="${w}" height="${hd}" fill="#cdc948"/><rect y="${hd}" width="${w}" height="${md - hd}" fill="url(#m)"/></g><path d="M${c} ${hd}V${h}" stroke="#a8a23c" stroke-width="${k == 1 ? 2 : 1}" opacity=".7"/><path d="M0 ${hd}H${w}" stroke="#111" stroke-width="${k == 1 ? 2.5 : 1.4}"/>` +
      (k == 1 ? `<path d="M3.500 ${hd - 2}V7Q3.500 3 8 3H${w - 8}Q${w - 3.5} 3 ${w - 3.5} 7V${hd - 2}" fill="none" stroke="#f3f0a8" stroke-width="1.800"/>` : '') +
      `<rect width="${w}" height="${h}" rx="${r}" fill="none" stroke="#111" stroke-width="${sw}"/>` +
      `<text x="${w / 2}" y="${hd * .5 + fs * .33}" font-size="${fs}" text-anchor="middle" textLength="${tw}" lengthAdjust="spacingAndGlyphs" fill="#111">${el.getAttribute('t')}</text>
      <g font-family="Liberation Mono,monospace" fill="#3a3a24">${figures('{0}', w * .808, h / 2 + m * .29, st, m) + figures('0', w * .028, h * .827 + m * .3, st, m) + figures(el.getAttribute('v'), c + 6 * k + .5, h * .827 + m * .3, st, m)}</g></svg>`;
  });
define('number-slider', ':host{display:block;position:absolute}svg{display:block;overflow:visible}',
  el => {
    const w = num(el, 'w'), h = 36, k = num(el, 'k'), vx = num(el, 'vx'), v = el.getAttribute('v'), tw = num(el, 'vw');
    el.style.left = el.getAttribute('x') + 'px'; el.style.top = el.getAttribute('y') + 'px';
    let ticks = '', a = 54, b = w - 18;
    for (let i = 0; i <= 10; i++) { const x = a + (b - a) * i / 10; if (Math.abs(x - vx - tw / 2) > tw / 2 + 2) ticks += `M${x} 17.500V${i % 5 ? 12 : 9}`; }
    return `<svg width="${w}" height="36"><defs><linearGradient id="s" x2="0" y2="1"><stop offset="0" stop-color="#fafafa"/><stop offset=".2" stop-color="#e2e2e2"/><stop offset="1" stop-color="#cdcdcd"/></linearGradient><linearGradient id="n" x2="0" y2="1"><stop offset="0" stop-color="#c4c3d0"/><stop offset=".5" stop-color="#a09fb0"/><stop offset="1" stop-color="#9190a2"/></linearGradient></defs>
    <path d="M${w + 5} 18H${w + 24}" stroke="#4d4360" stroke-width="4"/>${grip(w, 18, 1, 7.5)}<rect width="${w}" height="${h}" rx="5" fill="url(#s)" stroke="#222" stroke-width="2"/><path d="M36 1V35H5Q1 35 1 31V5Q1 1 5 1Z" fill="url(#n)"/><path d="M36.500 0V36" stroke="#222" stroke-width="2"/>
    <path d="M${a} 17.500H${b}${ticks}" stroke="#aaa" stroke-width="1.300" fill="none"/>${el.hasAttribute('round') ? `<circle cx="${k}" cy="18" r="5.200" fill="#fff" stroke="#000" stroke-width="3.200"/>` : `<path d="M${k - 5.5} 18L${k} 12.500L${k + 5.5} 18L${k} 23.500Z" fill="#fff" stroke="#000" stroke-width="2.200"/>`}
    <g font-size="18.500" fill="#1c1c1c"><text x="18" y="24" text-anchor="middle">${el.getAttribute('t')}</text><text x="${vx - 1}" y="24.500" textLength="${tw + 2}" lengthAdjust="spacingAndGlyphs">${v}</text></g></svg>`;
  });
define('tag-label', ':host{display:block;position:absolute}svg{display:block;overflow:visible}',
  el => { const w = num(el, 'w'), p = num(el, 'p'); el.style.left = el.getAttribute('x') + 'px'; el.style.top = el.getAttribute('y') + 'px';
    return `<svg width="${w}" height="42"><path d="M0 0H${w}V30H${p + 9}L${p} 41L${p - 9} 30H0Z" fill="#ececec" stroke="#111" stroke-width="1.800"/><text x="${w / 2}" y="21.500" text-anchor="middle" font-size="18.500" fill="#1a1a1a" textLength="${w - 17}" lengthAdjust="spacingAndGlyphs">${el.getAttribute('t')}</text></svg>`; });

function wires() {
  const src = [581, 609.5, 638.7, 668, 696, 726], end = [731, 749, 766, 784, 801, 818]; let d = '';
  const into = [[1628, 441], [1629, 516], [1631, 585], [1628, 424], [1629, 499], [1631, 568]];
  src.forEach((y, i) => {
    const [tx, ty] = into[i], c = i < 3 ? 95 : 115 - (i - 3) * 5;
    d += `M1455 ${y}C${1461 + c} ${y} ${tx - c} ${ty} ${tx} ${ty}`;
    d += `M1455 ${y}C1600 ${y} 1640 ${end[i] + 2} 1800 ${end[i] + 6}`;
    const e = 973 + i * 17;
    d += `M1455 ${y}C${1722 - i * 9} ${y} ${1327 + i * 5} ${e} 1608 ${e}`;
  });
  d += 'M1675 1015C1710 1015 1730 1020 1765 1030M2178 753Q2190 752 2204 752M2178 878Q2188 876 2197 876M2178 940Q2205 968 2230 981M2178 1064Q2200 1078 2230 1079M2178 1094L2230 1097M2178 1109L2230 1104M2178 1128Q2196 1060 2230 1038M2178 1125Q2200 1140 2230 1142M2086 1195Q2130 1194 2156 1166M2086 1191Q2150 1190 2230 1188M1915 1195H1948M1763 897Q1730 903 1734 905Q1740 906 1757 906M1757 906Q1732 914 1735 920Q1740 922 1757 922M2220 585L2230 578';
  return d;
}
define('gh-canvas', `:host{display:block;position:relative;width:1110px;height:1087px;overflow:hidden;background:#d4d0c8}svg.b{position:absolute;left:0;top:0}.o{position:absolute;left:-1119px;top:-233px;width:2233px;height:1352px}`,
  () => {
    let gl = ''; for (let x = 1162; x < 2229; x += 125.9) gl += `M${x} 233V1320`; for (let y = 270.500; y < 1320; y += 41.9) gl += `M1119 ${y}H2229`;
    return `<svg class="b" width="1110" height="1087" viewBox="1119 233 1110 1087"><defs><pattern id="h" width="5" height="5" patternUnits="userSpaceOnUse" patternTransform="rotate(45)"><rect width="5" height="5" fill="#d0ccc4"/><rect width="2.200" height="5" fill="#c6c2b9"/></pattern><filter id="f" x="-10%" y="-10%" width="120%" height="120%"><feGaussianBlur stdDeviation="9"/></filter></defs>
    <rect x="1119" y="233" width="1110" height="1087" fill="url(#h)"/><rect x="1157" y="348" width="1200" height="1100" fill="#1c1c18" opacity=".85" filter="url(#f)"/><rect x="1162" y="354" width="1100" height="1000" fill="#d4d0c8" stroke="#111" stroke-width="1.500"/>
    <path d="${gl}" stroke="#8d8a80" stroke-opacity=".42" stroke-width="1.300" fill="none"/>
    <path d="${wires()}" stroke="#222" stroke-opacity=".72" stroke-width="2.300" fill="none"/>
    <g fill="none" stroke="#444" stroke-width="5"><path d="M1688 424C1735 424 1735 457 1781 457M1688 499C1725 499 1735 478 1765 475M1692 568H1765"/></g><g fill="none" stroke="#aaa79f" stroke-width="1.600"><path d="M1688 424C1735 424 1735 457 1781 457M1688 499C1725 499 1735 478 1765 475M1692 568H1765"/></g>
    <g fill="none" stroke="#444" stroke-width="5" stroke-dasharray="10 4"><path d="M1905 463C1950 440 1950 412 2020 409M2081 418Q2095 417 2110 414M2170 414Q2200 413 2230 423M2221 508H2230M2221 649H2230"/></g><g fill="none" stroke="#bbb8b0" stroke-width="2" stroke-dasharray="8 6" stroke-dashoffset="-1"><path d="M1905 463C1950 440 1950 412 2020 409M2081 418Q2095 417 2110 414M2170 414Q2200 413 2230 423M2221 508H2230M2221 649H2230"/></g>
    <rect x="1732.500" y="701" width="50" height="14.500" fill="#eee" stroke="#333" stroke-width="1.300"/><text x="1736" y="711.500" font-size="10.500" fill="#222" textLength="26" lengthAdjust="spacingAndGlyphs">double</text>
    <rect x="2180" y="1200" width="44" height="24" rx="3" fill="#fffb58" stroke="#444" stroke-width="1.500"/><path d="M2180 1208A3 4 0 0 0 2180 1216M2224 1208A3 4 0 0 1 2224 1216" fill="#fff" stroke="#111" stroke-width="1.800"/><text x="2190" y="1213" font-size="9" font-family="Liberation Mono,monospace" fill="#444">100</text>
    <defs><radialGradient id="k"><stop offset="0" stop-color="#e6e6e6"/><stop offset="1" stop-color="#b4b4b4"/></radialGradient></defs><circle cx="2194" cy="1285" r="23.500" fill="#fff" stroke="#333" stroke-width="1.400"/><circle cx="2194" cy="1285" r="20" fill="url(#k)"/><path d="M2178 1269L2184 1273L2180 1276ZM2210 1269L2204 1273L2208 1276ZM2178 1301L2184 1297L2180 1294ZM2210 1301L2204 1297L2208 1294Z" fill="#fff" stroke="#fff" stroke-width="2"/><path d="M2172 1274Q2180 1260 2194 1260Q2206 1260 2214 1269" fill="none" stroke="#000" stroke-width="3.500"/><path d="M2167 1260L2176 1262L2173 1269L2169 1267Z" fill="#000"/>
    <rect x="1112" y="1288" width="15" height="40" rx="2" fill="#777" stroke="#111" stroke-width="2"/></svg>
    <div class="o"><gh-node x="1783.5" y="447" w="71.500" h="40" cx="28.500" in="X:10"></gh-node>` +
      [[1629, 397], [1630, 472], [1632, 541]].map(([x, y]) => `<gh-node x="${x}" y="${y}" w="55" h="54.500" cx="16" t="Series" dy="0" in="S:10.500,N:27,C:44" out="S:27"></gh-node>`).join('') +
      `<gh-node x="2022" y="398" w="56" h="42" cx="15" t="PLine" dy="0" in="V:10.500,C:30" out="Pl:20.500"></gh-node><gh-node x="2112" y="400" w="55" h="56" cx="15" t="Explode" dy="0" in="C:14,R:41" out="S:14,V:41"></gh-node>
      <gh-node x="1610" y="963" w="63" h="104" cx="17" light t="Python" dy="0" in="x:10,y:27,z:44,u:60.500,v:77.500,w:94" out="out:18.500,a:52,b:86"></gh-node>
      <gh-node x="2204" y="746" w="40" h="87" cx="17" light in="L:10,T:26.500,S:43,C:60,J:76.500"></gh-node><gh-node x="2198" y="867" w="60" h="17" in=":9"></gh-node><gh-node x="1759" y="897" w="40" h="36" light in=":9,:25"></gh-node>
      <svg style="position:absolute;left:2208px;top:868px" width="20" height="14"><text x="0" y="10.500" font-size="10.500" fill="#222" textLength="19" lengthAdjust="spacingAndGlyphs">Num</text></svg>
      <data-panel x="1949" y="1173" w="135" h="44" t="Frequency Error (%)" tw="80" v="-4.478423" gl></data-panel></div>`;
  });
define('gh-status', ':host{display:flex;align-items:center;height:28px;background:#f0f0f0;border-top:1px solid #fff;box-sizing:border-box;font-size:14px;color:#777}svg{margin-left:20px}b{color:#222}', run([['<b>...</b>', 11, 20], ['1.0.0007', 1027, 1075]]) + '<svg width="14" height="14" fill="#999"><path d="M9 0H12V3H9ZM4 5H7V8H4ZM9 5H12V8H9ZM0 10H3V13H0ZM4 10H7V13H4ZM9 10H12V13H9Z"/></svg>');
define('gh-window', ':host{display:flex;flex-direction:column;width:1110px;height:1348px;border-left:2px solid #6a6a6a;background:#f0f0f0;flex:none}gh-canvas{flex:none}',
  '<gh-title></gh-title><gh-menu></gh-menu><gh-tabs></gh-tabs><gh-ribbon></gh-ribbon><gh-toolbar></gh-toolbar><gh-canvas></gh-canvas><gh-status></gh-status>');

/* ---------- annotations over both windows ---------- */
define('red-frame', ':host{display:block;position:absolute;box-sizing:border-box;border:12px solid #f00;overflow:hidden}',
  el => { ['left', 'top', 'width', 'height'].forEach((p, i) => el.style[p] = el.getAttribute('box').split(' ')[i] + 'px'); if (el.hasAttribute('b')) el.style.borderWidth = el.getAttribute('b') + 'px'; return '<slot></slot>'; });
define('call-out', ':host{display:flex;flex-direction:column;position:absolute;box-sizing:border-box;background:#fff;color:#f00;font:700 36px/54.500px Carlito,"Open Sans",sans-serif;padding:3px 0 0 6px}fit-text{height:54.500px}',
  el => { ['left', 'top', 'width', 'height'].forEach((p, i) => el.style[p] = el.getAttribute('box').split(' ')[i] + 'px');
    const probe = document.createElement('canvas').getContext('2d'), width = f => { probe.font = '700 36px ' + f; return probe.measureText('Structure visualised').width; };
    if (width('Carlito,monospace') === width('monospace')) el.style.cssText += ';font:700 33px/54.5px Lato,sans-serif;padding-top:2px';
    return el.getAttribute('lines').split('|').map(l => { const [t, w] = l.split(':'); return `<fit-text w="${w}">${t}</fit-text>`; }).join(''); });
define('slider-board', ':host{display:block;position:relative;width:327px;height:436px;background:#d4d0c8}svg{position:absolute;left:0;top:0}',
  `<svg width="327" height="436"><path d="M3 41H327V212H3ZM8 262H326V436H8Z" fill="#baa6e6" stroke="#8f80b4" stroke-width="1.500"/><path d="M189 0V436M0 53H327M0 141H327M0 230H327M0 318H327M0 406H327" stroke="#555" stroke-opacity=".2" stroke-width="1.500"/></svg>
  <tag-label x="114" y="-1" w="107" p="53" t="Grid count"></tag-label><tag-label x="105" y="220" w="125" p="62" t="Grid spacing"></tag-label>
  <number-slider x="27.500" y="57.500" w="287" t="X" v="13" k="116" vx="131" vw="18"></number-slider><number-slider x="24" y="109" w="287" t="Y" v="12" k="110.500" vx="126" vw="18"></number-slider><number-slider x="20.500" y="158.500" w="287" t="Z" v="6" k="119.500" vx="134" vw="9"></number-slider>
  <number-slider round x="27.500" y="278.500" w="282" t="x" v="3.2" k="86.500" vx="101" vw="24"></number-slider><number-slider round x="26" y="332" w="282" t="y" v="2.2" k="71.500" vx="86" vw="24"></number-slider><number-slider round x="26" y="383" w="283" t="z" v="4.5" k="106.500" vx="120" vw="24"></number-slider>`);
define('result-board', ':host{display:block;position:relative;width:392px;height:446px;background:#d4d0c8;overflow:hidden}svg{position:absolute;left:0;top:0}',
  `<svg width="392" height="446"><path d="M258 0V446" stroke="#555" stroke-opacity=".25" stroke-width="1.500"/><path d="M247 163L340 139Q370 130 392 117M-2 295Q50 288 90 284M380 247L392 244" fill="none" stroke="#5c5b57" stroke-width="7"/></svg>
  <data-panel x="1.500" y="3.500" w="384" h="127" t="Frequency" tw="119" v="1.123509"></data-panel><data-panel x="-1" y="160" w="384" h="127" t="Uncertainty" tw="132" v="0.08589"></data-panel><data-panel gl x="2.500" y="316.500" w="386" h="127" t="Uncertainty %" tw="161" v="7.644799"></data-panel>`);
define('desk-top', ':host{display:flex;position:relative;width:2233px;height:1352px;overflow:hidden;background:linear-gradient(#666 0 120px,#1b2836 121px)}',
  `<rhino-window></rhino-window><gh-window></gh-window>
  <red-frame box="231 419 708 571"></red-frame><call-out box="237 1006 614 181" lines="Structure visualised in real time and:558|coloured according to uncertainty in:561|modal frequency prediction:430"></call-out>
  <red-frame box="1110 447 351 460"><slider-board></slider-board></red-frame><call-out box="1110 922 458 127" lines="Use sliders to construct a 3D:440|structure in real time:326"></call-out>
  <call-out box="1761 461 459 222" lines="Grasshopper consults NNs:406|via a RESTful API and:324|returns prediction and:348|uncertainty:178"></call-out>
  <red-frame b="13" box="1762 694 418 472"><result-board></result-board></red-frame>`);
</script>
</body>
</html>
